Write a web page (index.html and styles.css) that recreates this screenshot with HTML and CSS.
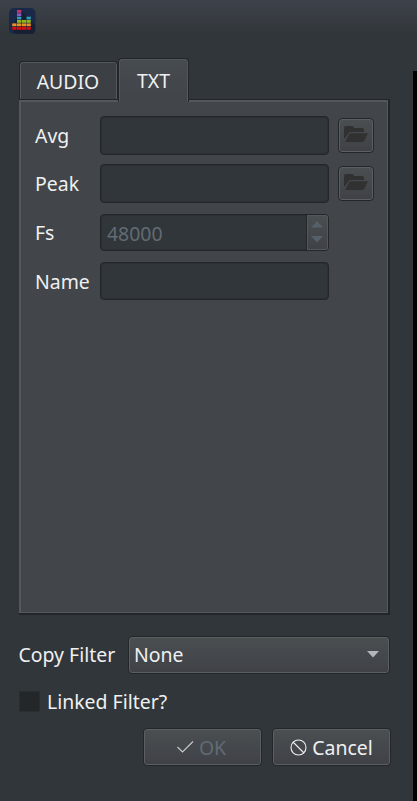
FILE: index.html
```html
<!DOCTYPE html>
<html lang="en">
<head>
<meta charset="utf-8">
<title>Import</title>
<link rel="stylesheet" href="styles.css">
</head>
<body>
<div class="window">
  <main class="dialog">
    <header class="titlebar">
      <svg class="app-icon" width="28" height="28" viewBox="0 0 28 28">
        <rect x="1" y="1" width="26.500" height="26" rx="5" fill="#1a2948"/>
        <path d="M12 3L27 18V23a4 4 0 0 1-4 4H8L4 22Z" fill="#152035"/>
        <g fill="#c9366f"><rect x="9" y="3" width="4.300" height="2.8"/></g>
        <g fill="#8a5bc4"><rect x="9" y="6.3" width="4.300" height="2.8"/></g>
        <g fill="#2e9fb4"><rect x="9" y="9.7" width="4.300" height="2.7"/><rect x="18.5" y="9.7" width="4.300" height="2.7"/></g>
        <g fill="#91b51b"><rect x="9" y="13" width="4.300" height="2.8"/><rect x="13.8" y="13" width="4.300" height="2.8"/><rect x="18.5" y="13" width="4.300" height="2.8"/></g>
        <g fill="#e49224"><rect x="4.2" y="16.4" width="4.300" height="2.8"/><rect x="9" y="16.4" width="4.300" height="2.8"/><rect x="13.8" y="16.4" width="4.300" height="2.8"/><rect x="18.5" y="16.4" width="4.300" height="2.8"/></g>
        <g fill="#d30d12"><rect x="4.2" y="19.800" width="4.300" height="3"/><rect x="9" y="19.800" width="4.300" height="3"/><rect x="13.8" y="19.800" width="4.300" height="3"/><rect x="18.5" y="19.800" width="4.300" height="3"/></g>
      </svg>
    </header>

    <div class="tabs">
      <div class="tab">AUDIO</div>
      <div class="tab active">TXT</div>
    </div>
    <section class="panel">
      <div class="row avg">
        <label>Avg</label><div class="field"></div>
        <div class="raised browse"><svg width="24" height="18" viewBox="0 0 24 18"><path d="M0 13V2Q0 0 2 0H8Q10 0 10 2H18Q20 2 20 4V6H7Q5 6 4 8Z"/><path d="M7.2 7.2H24L20.5 14.5Q20 16 18 16H1L5 8.5Q5.700 7.200 7.200 7.200Z"/></svg></div>
      </div>
      <div class="row peak">
        <label>Peak</label><div class="field"></div>
        <div class="raised browse"><svg width="24" height="18" viewBox="0 0 24 18"><path d="M0 13V2Q0 0 2 0H8Q10 0 10 2H18Q20 2 20 4V6H7Q5 6 4 8Z"/><path d="M7.2 7.2H24L20.5 14.5Q20 16 18 16H1L5 8.5Q5.700 7.200 7.200 7.200Z"/></svg></div>
      </div>
      <div class="row fs">
        <label>Fs</label>
        <div class="field spin"><span>48000</span>
          <div class="stepper"><svg width="12" height="22" viewBox="0 0 12 22"><path d="M0 6.500L6 0L12 6.500ZM0 15H12L6 21.500Z"/></svg></div>
        </div>
      </div>
      <div class="row name"><label>Name</label><div class="field"></div></div>
    </section>

    <div class="copy-row">
      <label>Copy Filter</label>
      <div class="raised combo"><span>None</span><svg width="12" height="7" viewBox="0 0 12 7"><path d="M0 0H12L6 6.500Z"/></svg></div>
    </div>
    <div class="check-row"><div class="checkbox"></div><span>Linked Filter?</span></div>
    <footer class="actions">
      <div class="raised button disabled"><svg width="17" height="17" viewBox="0 0 17 17"><path d="M.5 8L5.500 13L16 2.500"/></svg><span>OK</span></div>
      <div class="raised button"><svg width="17" height="17" viewBox="0 0 17 17"><circle cx="8.500" cy="8.500" r="7.500"/><path d="M3 3L14 14"/></svg><span>Cancel</span></div>
    </footer>
  </main>
  <div class="edge"></div>
</div>
</body>
</html>
```
FILE: styles.css
```css
* { box-sizing: border-box; }
body {
  margin: 0;
  font: 19.450px/26px "Noto Sans", sans-serif;
  color: #eff0f1;
}
.window {
  display: flex;
  width: 417px;
  height: 801px;
  overflow: hidden;
  background: linear-gradient(#3e424b 0, #31363a 34px) #31363a;
}
.dialog { width: 413px; padding-left: 19px; }
.edge { width: 4px; margin-top: 71px; background: #000; }
.titlebar { height: 58px; padding-top: 7px; }
.app-icon { display: block; margin-left: -11px; }

.tabs { display: flex; align-items: flex-end; height: 44px; position: relative; }
.tab {
  width: 99px;
  height: 38px;
  margin-bottom: 3px;
  padding: 7px 1px 0 0;
  text-align: center;
  border: 1px solid #222629;
  border-bottom: 0;
  border-radius: 4px 4px 0 0;
  box-shadow: inset 1px 1px #54585b, inset -1px 0 #54585b;
  background: #3c3f43;
}
.tab.active {
  width: 71px;
  height: 44px;
  margin-bottom: 0;
  padding: 9px 0 0;
  background: linear-gradient(#474c50, #414448);
}
.panel {
  width: 371px;
  height: 516px;
  margin-top: -3px;
  padding: 15px 0 0 14px;
  background: #424549;
  border: solid;
  border-width: 1px 2px 2px 0;
  border-color: #222629;
  box-shadow: inset 2px 2px #54585b, inset -1px -1px #54585b;
}
.row { display: flex; align-items: center; height: 40px; padding-left: 2px; }
.row label { width: 65px; flex: none; padding-top: 2px; }
.peak { margin-top: 8px; }
.fs { margin-top: 9px; }
.name { margin-top: 9px; }
.field {
  width: 229px;
  height: 39px;
  border: 1px solid #23272a;
  border-radius: 4px;
  background: #31363a;
  box-shadow: inset 0 0 0 1px #2b3034;
}
.name .field { height: 38px; }
.raised {
  border: 1px solid #23272a;
  border-radius: 4px;
  box-shadow: inset 0 0 0 1px #5b5f62;
  background: linear-gradient(#4a4f52, #3f4146);
}
.browse {
  display: flex;
  width: 36px;
  height: 35px;
  margin-left: 9px;
  padding: 7px 0 0 5px;
}
.browse svg { fill: #313131; }
.spin {
  display: flex;
  height: 37px;
  padding-left: 6px;
  justify-content: space-between;
  line-height: 37px;
  color: #616b74;
}
.stepper {
  width: 22px;
  height: 35px;
  padding: 6px 0 0 4px;
  line-height: 0;
  border-left: 1px solid #23272a;
  border-radius: 0 3px 3px 0;
  box-shadow: inset 0 0 0 1px #54585b;
  background: linear-gradient(#4a4f52, #3f4146);
}
.stepper svg { fill: #566068; }

.copy-row { display: flex; align-items: center; height: 39px; margin: 20px 0 0 -.5px; }
.copy-row label { width: 109.500px; }
.combo {
  display: flex;
  width: 262px;
  height: 38px;
  padding: 0 10px 0 5px;
  align-items: center;
  justify-content: space-between;
}
.combo svg { fill: #b4b7b9; }
.check-row { display: flex; align-items: center; height: 26px; margin-top: 15px; }
.checkbox { width: 21px; height: 21px; margin: -2px 7px 0 0; background: #232729; border: 1px solid #292e31; }
.actions { display: flex; gap: 10px; margin: 13px 0 0 124px; }
.button {
  display: flex;
  width: 119px;
  height: 38px;
  align-items: center;
  justify-content: center;
  gap: 5px;
}
.button span { padding-top: 2px; }
.disabled { padding-right: 2px; }
.button svg { fill: none; stroke: #eff0f1; stroke-width: 1.100; }
.disabled { color: #616b74; }
.disabled svg { stroke: #c8cacc; }
```
